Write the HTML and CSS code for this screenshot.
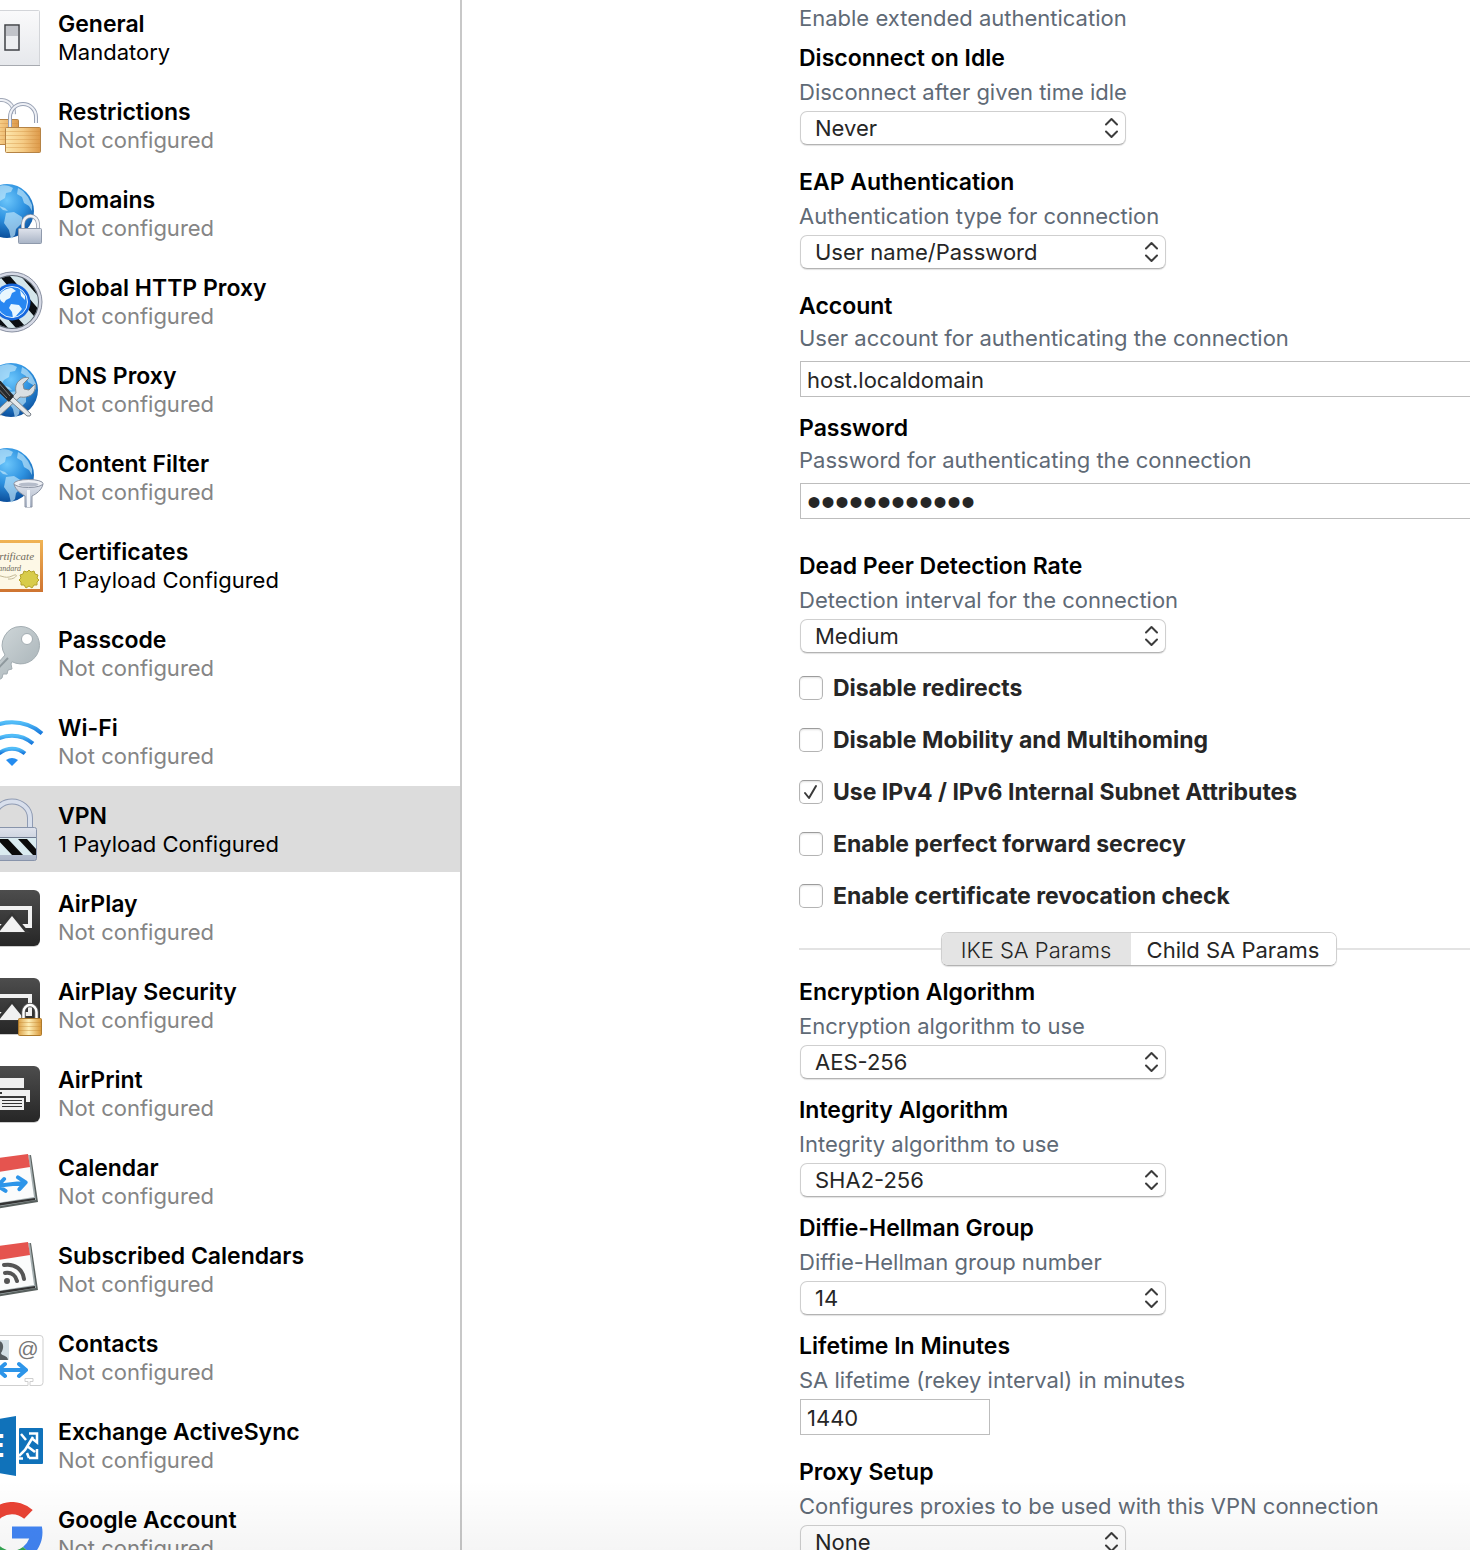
FILE: index.html
```html
<!DOCTYPE html>
<html lang="en">
<head>
<meta charset="utf-8">
<meta name="viewport" content="width=device-width, initial-scale=1">
<title>VPN Profile</title>
<link rel="stylesheet" href="styles.css">
</head>
<body>
<svg class="defs" aria-hidden="true">
  <defs>
    <linearGradient id="plate" x2="0" y2="1"><stop stop-color="#fafafb"/><stop offset="1" stop-color="#e6e8ec"/></linearGradient>
    <linearGradient id="silver" x2="0" y2="1"><stop stop-color="#dfe3ec"/><stop offset="1" stop-color="#a9b4c6"/></linearGradient>
    <linearGradient id="gold"><stop stop-color="#fde6ac"/><stop offset=".5" stop-color="#f5cb85"/><stop offset="1" stop-color="#dc9848"/></linearGradient>
    <linearGradient id="brass"><stop stop-color="#dca147"/><stop offset=".45" stop-color="#fff0b8"/><stop offset="1" stop-color="#d89535"/></linearGradient>
    <linearGradient id="dark" x2="0" y2="1"><stop stop-color="#4d4d4d"/><stop offset="1" stop-color="#262626"/></linearGradient>
    <linearGradient id="key" x2="1" y2="1"><stop stop-color="#d5dcde"/><stop offset="1" stop-color="#a4afb4"/></linearGradient>
    <linearGradient id="wave" x2="0" y2="1"><stop stop-color="#52bdf8"/><stop offset="1" stop-color="#1878dc"/></linearGradient>
    <linearGradient id="frame" x2="0" y2="1"><stop stop-color="#f0b455"/><stop offset="1" stop-color="#cf7431"/></linearGradient>
    <radialGradient id="ocean" cx=".5" cy=".3" r=".7"><stop stop-color="#6cc6fb"/><stop offset=".5" stop-color="#2e92e0"/><stop offset="1" stop-color="#0b4f9c"/></radialGradient>
    <g id="globe">
      <circle cx="27" cy="28" r="27" fill="url(#ocean)"/>
      <path d="M8 9C14 3 24 1 29 3l4 2-2 4-5 1-1 5-5 3-3 5-4-2-3-7zM38 5l5 3 5 6 4 8 0 6-3-5-5-3-2-6-5-3zM19 23l6 2 3 3-5-1zM26 30l8-1 8 5 0 6-6 6-1 6-4 4-2-9-5-7z" fill="#c5e8fb" opacity=".65"/>
    </g>
    <g id="tile">
      <rect x="4" y="5" width="56" height="56" rx="6" fill="#000" opacity=".2"/>
      <rect x="4" y="4" width="56" height="56" rx="6" fill="url(#dark)"/>
    </g>
    <g id="airplay">
      <use href="#tile"/>
      <path d="M22 40h-8V22h36v18h-8" fill="none" stroke="#f1f1f1" stroke-width="4"/>
      <path d="M32 26 14 47h36z" fill="#363636"/><path d="M32 30 19 46h26z" fill="#f1f1f1"/>
    </g>
    <g id="calendar">
      <path d="M10 11 51 5l7 47-48 8z" fill="#59615f"/>
      <path d="M10 11 50 5l6 45-46 8z" fill="#a5afb1"/>
      <path d="M10 54.500 55 48v2l-45 7z" fill="#333"/>
      <path d="M4 10 48 4l6 43-44 7z" fill="#fbfcfc"/>
      <path d="M4 10 48 4l2 13-44 7z" fill="#e5544f"/>
    </g>
    <g id="arrows" fill="none" stroke="#2d95e9" stroke-width="4" stroke-linecap="round" stroke-linejoin="round">
      <path d="M18 0h28M39-6l7 6-7 6M25-6l-7 6 7 6"/>
    </g>
    <g id="chevrons"><path d="M2 7.500 7.500 2 13 7.500M2 14.500 7.500 20 13 14.500"/></g>
  </defs>
</svg>

<div class="window">
  <nav class="sidebar" aria-label="Payloads">
    <ul class="payloads">
      <li><a class="payload" href="#general">
        <svg class="icon" viewBox="0 0 64 64"><rect x="4.500" y="4.500" width="55" height="55" rx="1" fill="url(#plate)" stroke="#d3d5d9"/><path d="M4 59.500h56" stroke="#a7aab0"/><rect x="25" y="19" width="14" height="25" fill="#edeef1" stroke="#3f4146" stroke-width="1.500"/><path d="M26 20h12v10H26z" fill="#c1c3c9"/></svg>
        <span class="label"><strong>General</strong><span class="state on">Mandatory</span></span></a></li>
      <li><a class="payload" href="#restrictions">
        <svg class="icon" viewBox="0 0 64 64"><path d="M8 25V18a13 13 0 0 1 26 2" fill="none" stroke="#a3aab9" stroke-width="4"/><path d="M8 25V18a13 13 0 0 1 26 2" fill="none" stroke="#eff1f6" stroke-width="2"/><rect x="2.500" y="25.500" width="36" height="25" rx="1" fill="url(#gold)" stroke="#b58345"/><path d="M3 29.500h35M3 33.500h35M3 37.500h35M3 41.500h35M3 45.500h35" stroke="#cf8c3c" opacity=".35"/><path d="M30 34V23a13 13 0 0 1 26 0v6" fill="none" stroke="#98a1b4" stroke-width="4"/><path d="M30 34V23a13 13 0 0 1 26 0v6" fill="none" stroke="#eff1f6" stroke-width="2"/><rect x="25.500" y="33.500" width="35" height="25" rx="1" fill="url(#gold)" stroke="#b58345"/><path d="M26 37.500h34M26 41.500h34M26 45.500h34M26 49.500h34M26 53.500h34" stroke="#cf8c3c" opacity=".35"/></svg>
        <span class="label"><strong>Restrictions</strong><span class="state">Not configured</span></span></a></li>
      <li><a class="payload" href="#domains">
        <svg class="icon" viewBox="0 0 64 64"><use href="#globe" y="1"/><path d="M43 47v-5a7.500 8 0 0 1 15 0v5" fill="none" stroke="#8f98a9" stroke-width="4"/><path d="M43 47v-5a7.500 8 0 0 1 15 0v5" fill="none" stroke="#f1f3f7" stroke-width="2.500"/><rect x="38.500" y="46.500" width="23" height="15" rx="1" fill="url(#silver)" stroke="#8f9aac"/></svg>
        <span class="label"><strong>Domains</strong><span class="state">Not configured</span></span></a></li>
      <li><a class="payload" href="#http-proxy">
        <svg class="icon" viewBox="0 0 64 64"><clipPath id="dial"><circle cx="32" cy="32" r="26"/></clipPath><circle cx="32" cy="32" r="30" fill="#d5d9e5" stroke="#8a91a2"/><circle cx="32" cy="32" r="27" fill="#5a6470"/><g clip-path="url(#dial)"><path d="M0 0h64v64H0z" fill="#d4e5ea"/><path d="M-10 22 32 68M0 12l54 60M16-4l50 58M32-10l40 46" stroke="#0c0f12" stroke-width="8"/></g><circle cx="32" cy="32" r="18.500" fill="#1667dd"/><circle cx="32" cy="32" r="15.500" fill="#2887f2" stroke="#e2f1ff"/><path d="M19 27c1-5 7-9 13-9l4 3-4 2-2 5-4 2-2 3-3-2zM31 34l8 1 3 4-6 7-3 2-1-6-3-4zM40 20l5 6 0 4-4-4z" fill="#e9f6fe"/></svg>
        <span class="label"><strong>Global HTTP Proxy</strong><span class="state">Not configured</span></span></a></li>
      <li><a class="payload" href="#dns-proxy">
        <svg class="icon" viewBox="0 0 64 64"><use href="#globe" x="4" y="4"/><path d="M12 57 36 35c-1-6 0-10 4-13 3-3 7-3 9-2l-6 6 1 5 5 1 6-6c1 6-2 11-6 12-4 2-7 1-9 1L17 60z" fill="#d9dfe3" stroke="#7d8890"/><path d="m33 39 18 17-1 2-3 0-18-16z" fill="#e5e8ea" stroke="#777f87"/><path d="M12 20 17 19 34 38l-5 6L12 28z" fill="#25282b"/><path d="m17 23 13 15M14 26l13 14" stroke="#777"/></svg>
        <span class="label"><strong>DNS Proxy</strong><span class="state">Not configured</span></span></a></li>
      <li><a class="payload" href="#content-filter">
        <svg class="icon" viewBox="0 0 64 64"><use href="#globe" y="1"/><path d="M34 38c1 6 8 10 11 12v11h7V50c4-2 10-6 11-12z" fill="url(#silver)" stroke="#8b93a3"/><path d="M47 44h3v17h-3z" fill="#f4f6fa"/><ellipse cx="48.500" cy="37.500" rx="14.500" ry="4" fill="#eef0f5" stroke="#8b93a3"/><ellipse cx="48.500" cy="38.500" rx="10" ry="2" fill="#b5bcca"/></svg>
        <span class="label"><strong>Content Filter</strong><span class="state">Not configured</span></span></a></li>
      <li><a class="payload" href="#certificates">
        <svg class="icon" viewBox="0 0 64 64"><rect x="1" y="6" width="62" height="52" fill="url(#frame)"/><rect x="4" y="9" width="56" height="46" fill="#fdf8e6"/><text class="script" x="7" y="26" font-size="11">Certificate</text><text class="script" x="12" y="37" font-size="8">Standard</text><path d="M12 42c8-3 12 4 20 0s4 4-4 3" fill="none" stroke="#c3b896"/><path d="m49 36 2 2 3-1 1 3 3 1-1 3 2 2-2 2 0 3-3 0-2 3-3-2-3 2-2-3-3 0 0-3-2-2 2-2-1-3 3-1 1-3 3 1z" fill="#d8cc4a" stroke="#b5a32c"/></svg>
        <span class="label"><strong>Certificates</strong><span class="state on">1 Payload Configured</span></span></a></li>
      <li><a class="payload" href="#passcode">
        <svg class="icon" viewBox="0 0 64 64"><path fill-rule="evenodd" d="M41 4.500a18.700 18.700 0 1 1-9 35.200l-1 2.300 1 5-4 1-1 4-4 0-1 4-10 6-6-1v-6L25 33A18.700 18.700 0 0 1 41 4.500zM47 11.500a5.500 5.500 0 1 0 0 11 5.500 5.500 0 0 0 0-11z" fill="url(#key)" stroke="#a3adb2"/><path d="M7 58 28 36" stroke="#8f999e" stroke-width="2"/></svg>
        <span class="label"><strong>Passcode</strong><span class="state">Not configured</span></span></a></li>
      <li><a class="payload" href="#wifi">
        <svg class="icon" viewBox="0 0 64 64"><g fill="none" stroke="url(#wave)" stroke-width="4"><path d="M2 23.500a46 46 0 0 1 60 0"/><path d="M11 33.500a32 32 0 0 1 42 0"/><path d="M19 43.500a20 20 0 0 1 26 0"/></g><path d="M26 50q6-4 12 0l-6 6z" fill="#238cf0"/></svg>
        <span class="label"><strong>Wi-Fi</strong><span class="state">Not configured</span></span></a></li>
      <li><a class="payload selected" href="#vpn" aria-current="page">
        <svg class="icon" viewBox="0 0 64 64"><path d="M14 30V20a18 16.500 0 0 1 36 0v10" fill="none" stroke="#8f9bb3" stroke-width="6"/><path d="M14 30V20a18 16.500 0 0 1 36 0v10" fill="none" stroke="#d8dfec" stroke-width="4"/><rect x="7.500" y="29.500" width="49" height="33" rx="2" fill="url(#silver)" stroke="#8894ab"/><path d="M8 40h48v17H8z" fill="#daebf0"/><path d="M17 41h11l15 16H32zM38 41h9l9 10v6h-3zM8 52l4 5H8z" fill="#0b0b0b"/><path d="M8 39.500h48" stroke="#6f7b90"/></svg>
        <span class="label"><strong>VPN</strong><span class="state on">1 Payload Configured</span></span></a></li>
      <li><a class="payload" href="#airplay-settings">
        <svg class="icon" viewBox="0 0 64 64"><use href="#airplay"/></svg>
        <span class="label"><strong>AirPlay</strong><span class="state">Not configured</span></span></a></li>
      <li><a class="payload" href="#airplay-security">
        <svg class="icon" viewBox="0 0 64 64"><use href="#airplay"/><path d="M43.500 45v-7a6.500 7 0 0 1 13 0v7" fill="none" stroke="#555" stroke-width="4.500"/><path d="M43.500 45v-7a6.500 7 0 0 1 13 0v7" fill="none" stroke="#fff" stroke-width="2.500"/><rect x="38.500" y="44.500" width="23" height="17" rx="1" fill="url(#brass)" stroke="#ad7a2c"/><path d="M39 48.500h22M39 52.500h22M39 56.500h22" stroke="#c58a35" opacity=".4"/></svg>
        <span class="label"><strong>AirPlay Security</strong><span class="state">Not configured</span></span></a></li>
      <li><a class="payload" href="#airprint">
        <svg class="icon" viewBox="0 0 64 64"><use href="#tile"/><path d="M20 16h24v10H20zM14 28h36v12h-4v-6H18v6h-4z" fill="#efefef"/><path d="M20 36h24v12H20z" fill="#efefef"/><path d="M22 38.500h20M22 41.500h20M22 44.500h20" stroke="#333"/><path d="M17 31h5" stroke="#333" stroke-width="2"/></svg>
        <span class="label"><strong>AirPrint</strong><span class="state">Not configured</span></span></a></li>
      <li><a class="payload" href="#calendar-settings">
        <svg class="icon" viewBox="0 0 64 64"><use href="#calendar"/><use href="#arrows" transform="translate(0 38) rotate(-7)"/></svg>
        <span class="label"><strong>Calendar</strong><span class="state">Not configured</span></span></a></li>
      <li><a class="payload" href="#subscribed">
        <svg class="icon" viewBox="0 0 64 64"><use href="#calendar"/><g fill="none" stroke="#555" stroke-width="4" stroke-linecap="round"><path d="M24 27c11-2 19 5 20 14M25 35c7-1 11 3 12 8"/></g><circle cx="27" cy="43" r="3" fill="#555"/></svg>
        <span class="label"><strong>Subscribed Calendars</strong><span class="state">Not configured</span></span></a></li>
      <li><a class="payload" href="#contacts">
        <svg class="icon" viewBox="0 0 64 64"><path d="M3 9.500h57q3 0 3 3v44q0 3-3 3H50v-4h3v-3h-8v3h3v4H3" fill="#fff" stroke="#cfcfcf"/><path d="M4 14h25v20H4z" fill="#d3dfe5"/><path d="M8 34c0-5 8-4 8-7-4-5-3-12 2-12s7 6 3 12c0 3 7 2 7 7z" fill="#555c60"/><text class="at" x="37" y="30" font-size="21">@</text><use href="#arrows" y="44"/></svg>
        <span class="label"><strong>Contacts</strong><span class="state">Not configured</span></span></a></li>
      <li><a class="payload" href="#exchange">
        <svg class="icon" viewBox="0 0 64 64"><path d="M0 8 36 2v60L0 56z" fill="#1072ba"/><text class="exchange" x="7" y="43" font-size="32">E</text><rect x="39" y="14" width="24" height="36" rx="1" fill="#1072ba"/><g fill="none" stroke="#fff" stroke-width="2.500"><path d="m39 42 6-6 8-13M41 20l5 6M47 32l8 6M49 19.500h8v9l-5-4M57 35v9h-8M47 39l2 5M39 44.500h4"/></g></svg>
        <span class="label"><strong>Exchange ActiveSync</strong><span class="state">Not configured</span></span></a></li>
      <li><a class="payload" href="#google">
        <svg class="icon" viewBox="3 4 42 42"><path fill="#4285f4" d="M43.600 20H24v8h11.300a12 12 0 0 1-4.100 5.600l6.200 5.200C37 39.200 44 34 44 24c0-1.300-.1-2.700-.4-4z"/><path fill="#ea4335" d="m6.300 14.700 6.600 4.800A12 12 0 0 1 24 12c3.100 0 5.800 1.200 8 3l5.600-5.700A20 20 0 0 0 6.300 14.700z"/><path fill="#34a853" d="M24 44c5.200 0 9.900-2 13.400-5.200l-6.200-5.200A12 12 0 0 1 12.700 28l-6.500 5A20 20 0 0 0 24 44z"/><path fill="#fbbc05" d="M6.300 14.700A20 20 0 0 0 6.200 33l6.500-5a12 12 0 0 1 .2-8.500z"/></svg>
        <span class="label"><strong>Google Account</strong><span class="state">Not configured</span></span></a></li>
    </ul>
  </nav>

  <main class="detail">
    <form class="form">
      <p class="hint">Enable extended authentication</p>

      <div class="field close">
        <label for="idle">Disconnect on Idle</label>
        <p class="hint">Disconnect after given time idle</p>
        <div class="popup narrow"><select id="idle"><option>Never</option></select><svg viewBox="0 0 15 22"><use href="#chevrons"/></svg></div>
      </div>
      <div class="field spaced">
        <label for="eap">EAP Authentication</label>
        <p class="hint">Authentication type for connection</p>
        <div class="popup"><select id="eap"><option>User name/Password</option></select><svg viewBox="0 0 15 22"><use href="#chevrons"/></svg></div>
      </div>
      <div class="field text spaced">
        <label for="account">Account</label>
        <p class="hint">User account for authenticating the connection</p>
        <input class="box" id="account" type="text" value="host.localdomain">
      </div>
      <div class="field text">
        <label for="password">Password</label>
        <p class="hint">Password for authenticating the connection</p>
        <input class="box" id="password" type="password" value="secretsecret">
      </div>
      <div class="field section">
        <label for="dpd">Dead Peer Detection Rate</label>
        <p class="hint">Detection interval for the connection</p>
        <div class="popup"><select id="dpd"><option>Medium</option></select><svg viewBox="0 0 15 22"><use href="#chevrons"/></svg></div>
      </div>

      <div class="checks">
        <label class="check"><input type="checkbox"><svg viewBox="0 0 24 24"><path d="m6 13 4 5 7-12"/></svg><span>Disable redirects</span></label>
        <label class="check"><input type="checkbox"><svg viewBox="0 0 24 24"><path d="m6 13 4 5 7-12"/></svg><span>Disable Mobility and Multihoming</span></label>
        <label class="check"><input type="checkbox" checked><svg viewBox="0 0 24 24"><path d="m6 13 4 5 7-12"/></svg><span>Use IPv4 / IPv6 Internal Subnet Attributes</span></label>
        <label class="check"><input type="checkbox"><svg viewBox="0 0 24 24"><path d="m6 13 4 5 7-12"/></svg><span>Enable perfect forward secrecy</span></label>
        <label class="check"><input type="checkbox"><svg viewBox="0 0 24 24"><path d="m6 13 4 5 7-12"/></svg><span>Enable certificate revocation check</span></label>
      </div>

      <div class="tabbar">
        <div class="tabs" role="tablist">
          <button type="button" role="tab" aria-selected="false" class="tab ike">IKE SA Params</button>
          <button type="button" role="tab" aria-selected="true" class="tab child">Child SA Params</button>
        </div>
      </div>

      <div class="field close">
        <label for="enc">Encryption Algorithm</label>
        <p class="hint">Encryption algorithm to use</p>
        <div class="popup"><select id="enc"><option>AES-256</option></select><svg viewBox="0 0 15 22"><use href="#chevrons"/></svg></div>
      </div>
      <div class="field">
        <label for="integrity">Integrity Algorithm</label>
        <p class="hint">Integrity algorithm to use</p>
        <div class="popup"><select id="integrity"><option>SHA2-256</option></select><svg viewBox="0 0 15 22"><use href="#chevrons"/></svg></div>
      </div>
      <div class="field">
        <label for="dh">Diffie-Hellman Group</label>
        <p class="hint">Diffie-Hellman group number</p>
        <div class="popup"><select id="dh"><option>14</option></select><svg viewBox="0 0 15 22"><use href="#chevrons"/></svg></div>
      </div>
      <div class="field">
        <label for="lifetime">Lifetime In Minutes</label>
        <p class="hint">SA lifetime (rekey interval) in minutes</p>
        <input class="box short" id="lifetime" type="text" value="1440">
      </div>
      <div class="field spaced">
        <label for="proxy">Proxy Setup</label>
        <p class="hint">Configures proxies to be used with this VPN connection</p>
        <div class="popup narrow"><select id="proxy"><option>None</option></select><svg viewBox="0 0 15 22"><use href="#chevrons"/></svg></div>
      </div>
    </form>
  </main>
</div>
</body>
</html>
```
FILE: styles.css
```css
* {
  box-sizing: border-box;
}

body {
  margin: 0;
  background: #fff;
  color: #000;
  font: 22px/28px Inter, "Liberation Sans", sans-serif;
}

p,
ul {
  margin: 0;
  padding: 0;
  list-style: none;
}

.defs {
  position: absolute;
  width: 0;
  height: 0;
}

.window {
  position: relative;
  display: flex;
  height: 100vh;
  overflow: hidden;
}

/* soft shade along the lower edge of the window */
.window::after {
  content: "";
  position: absolute;
  inset: auto 0 0;
  height: 70px;
  background: linear-gradient(rgba(0, 0, 0, 0), rgba(0, 0, 0, .04));
  pointer-events: none;
}

.sidebar {
  flex: 0 0 462px;
  overflow: hidden;
  border-right: 2px solid #c8c8c8;
}

/* the list is scrolled slightly up and to the right of its own edge */
.payloads {
  display: flex;
  flex-direction: column;
  gap: 2px;
  margin: -6px 0 0 -20px;
}

.payload {
  display: flex;
  gap: 14px;
  height: 86px;
  padding-top: 12px;
  color: inherit;
  text-decoration: none;
}

.payload.selected {
  background: #dcdcdc;
}

.icon {
  flex: none;
  width: 64px;
  height: 64px;
}

.script {
  fill: #6f6a5c;
  font-family: "Liberation Serif", serif;
  font-style: italic;
}

.at {
  fill: #777;
  font-family: "Liberation Sans", sans-serif;
  font-style: italic;
}

.exchange {
  fill: #fff;
  font-family: "Open Sans", sans-serif;
  font-weight: 700;
}

.label {
  display: flex;
  flex-direction: column;
  padding-top: 4px;
}

strong,
.field > label {
  font-size: 23px;
  font-weight: 600;
}

.state {
  color: #858585;
}

.state.on {
  color: #000;
}

.detail {
  flex: 1;
  min-width: 0;
  padding-left: 337px;
  overflow: hidden;
}

/* the form runs a little past the visible edge */
.form {
  margin-right: -8px;
  padding-top: 4px;
}

.field {
  display: flex;
  flex-direction: column;
  align-items: flex-start;
  margin-top: 17px;
}

.field.close {
  margin-top: 12px;
}

.field.spaced {
  margin-top: 23px;
}

.field.section {
  margin-top: 33px;
}

.hint {
  color: #5f6a76;
  white-space: nowrap;
}

.field .hint {
  margin: 6px 0 5px;
}

.field.text .hint {
  margin: 4px 0 9px;
}

.popup {
  display: grid;
  align-items: center;
  width: 366px;
  margin-left: 1px;
}

.popup.narrow {
  width: 326px;
}

.popup > * {
  grid-area: 1 / 1;
}

.popup select {
  width: 100%;
  height: 34px;
  padding: 0 40px 0 14px;
  appearance: none;
  border: 1px solid #cfcfcf;
  border-bottom-color: #b3b3b3;
  border-radius: 7px;
  background: #fff;
  box-shadow: 0 1px 1px rgba(0, 0, 0, .12);
  color: #262626;
  font: inherit;
}

.popup svg {
  justify-self: end;
  width: 15px;
  height: 22px;
  margin-right: 7px;
  fill: none;
  stroke: #3c3c3c;
  stroke-width: 2;
  stroke-linecap: round;
  stroke-linejoin: round;
  pointer-events: none;
}

.box {
  width: 100%;
  height: 36px;
  margin-left: 1px;
  padding: 2px 6px 0;
  border: 1px solid #bdbdbd;
  border-radius: 0;
  background: #fff;
  color: #262626;
  font: inherit;
}

/* large bullets */
.box[type="password"] {
  font: 40px/28px "Liberation Sans", sans-serif;
}

.box.short {
  width: 190px;
}

.checks {
  display: flex;
  flex-direction: column;
  align-items: flex-start;
  gap: 24px;
  margin: 21px 0 22px;
  color: #262626;
}

.check {
  display: grid;
  grid-template-columns: 24px auto;
  align-items: center;
  column-gap: 10px;
  font-size: 23px;
  font-weight: 700;
  white-space: nowrap;
}

.check input,
.check svg {
  grid-area: 1 / 1;
  width: 24px;
  height: 24px;
  margin: 0;
}

.check input {
  appearance: none;
  border: 1px solid #b4b4b4;
  border-top-color: #9c9c9c;
  border-radius: 5px;
  background: #fff;
  box-shadow: inset 0 1px 2px rgba(0, 0, 0, .12);
}

.check svg {
  visibility: hidden;
  fill: none;
  stroke: #3a3a3a;
  stroke-width: 2;
  stroke-linecap: round;
  stroke-linejoin: round;
  pointer-events: none;
}

.check input:checked + svg {
  visibility: visible;
}

.tabbar {
  display: flex;
  align-items: center;
}

.tabbar::before,
.tabbar::after {
  content: "";
  flex: 1;
  height: 2px;
  background: #e3e3e3;
}

.tabs {
  display: flex;
  height: 34px;
  overflow: hidden;
  border: 1px solid #cfcfcf;
  border-bottom-color: #b3b3b3;
  border-radius: 7px;
  box-shadow: 0 1px 1px rgba(0, 0, 0, .12);
}

.tab {
  padding: 2px 0 0;
  border: 0;
  background: #fff;
  color: #262626;
  font: inherit;
  white-space: nowrap;
}

.tab.ike {
  width: 189px;
  background: #e4e4e4;
  font-weight: 300;
}

.tab.child {
  width: 205px;
}
```
